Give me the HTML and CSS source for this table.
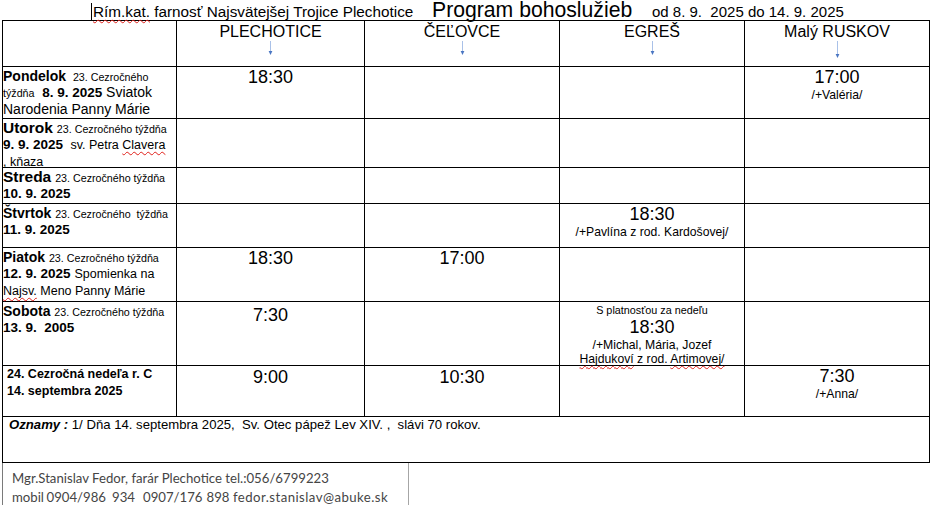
FILE: index.html
```html
<!DOCTYPE html>
<html lang="sk">
<head>
<meta charset="utf-8">
<title>Program bohoslužieb</title>
<link rel="stylesheet" href="styles.css">
</head>
<body>
<header class="title-line">
  <span class="parish"><span class="sp">Rím.kat.</span> farnosť Najsvätejšej Trojice Plechotice</span>
  <span class="prog">Program bohoslužieb</span>
  <span class="dates">od 8. 9.&nbsp; 2025 do 14. 9. 2025</span>
</header>

<main class="schedule">
  <!-- header row -->
  <div class="head"></div>
  <div class="head"><div class="place">PLECHOTICE</div><svg class="arrow" width="7" height="15" viewBox="0 0 7 15"><line x1="3.5" y1="0" x2="3.5" y2="11" stroke="#a9c1e8" stroke-width="1"/><path d="M1.6 10 L5.4 10 L3.5 14 Z" fill="#4a76c2"/></svg></div>
  <div class="head"><div class="place">ČEĽOVCE</div><svg class="arrow" width="7" height="15" viewBox="0 0 7 15"><line x1="3.5" y1="0" x2="3.5" y2="11" stroke="#a9c1e8" stroke-width="1"/><path d="M1.6 10 L5.4 10 L3.5 14 Z" fill="#4a76c2"/></svg></div>
  <div class="head"><div class="place">EGREŠ</div><svg class="arrow" width="7" height="15" viewBox="0 0 7 15"><line x1="3.5" y1="0" x2="3.5" y2="11" stroke="#a9c1e8" stroke-width="1"/><path d="M1.6 10 L5.4 10 L3.5 14 Z" fill="#4a76c2"/></svg></div>
  <div class="head"><div class="place">Malý RUSKOV</div><svg class="arrow" width="7" height="18" viewBox="0 0 7 18"><line x1="3.5" y1="0" x2="3.5" y2="14" stroke="#a9c1e8" stroke-width="1"/><path d="M1.6 13 L5.4 13 L3.5 17 Z" fill="#4a76c2"/></svg></div>

  <!-- Monday -->
  <div class="day"><b class="dn">Pondelok</b> <span class="wk">&nbsp;23. Cezročného</span><br><span class="wk">týždňa</span> <b class="dt">&nbsp;8. 9. 2025</b> Sviatok<br>Narodenia Panny Márie</div>
  <div class="slot"><div class="t">18:30</div></div>
  <div class="slot"></div>
  <div class="slot"></div>
  <div class="slot"><div class="t">17:00</div><div class="n">/+Valéria/</div></div>

  <!-- Tuesday -->
  <div class="day"><b class="dn big">Utorok</b> <span class="wk">23. Cezročného týždňa</span><br><b class="dt">9. 9. 2025</b> <span class="sm">&nbsp;sv. Petra <span class="sp">Clavera</span></span><br><span class="sm">, kňaza</span></div>
  <div class="slot"></div>
  <div class="slot"></div>
  <div class="slot"></div>
  <div class="slot"></div>

  <!-- Wednesday -->
  <div class="day"><b class="dn big">Streda</b> <span class="wk">23. Cezročného týždňa</span><br><b class="dt">10. 9. 2025</b></div>
  <div class="slot"></div>
  <div class="slot"></div>
  <div class="slot"></div>
  <div class="slot"></div>

  <!-- Thursday -->
  <div class="day"><b class="dn">Štvrtok</b> <span class="wk">23. Cezročného&nbsp; týždňa</span><br><b class="dt">11. 9. 2025</b></div>
  <div class="slot"></div>
  <div class="slot"></div>
  <div class="slot"><div class="t">18:30</div><div class="n">/+Pavlína z rod. Kardošovej/</div></div>
  <div class="slot"></div>

  <!-- Friday -->
  <div class="day"><b class="dn">Piatok</b> <span class="wk">23. Cezročného týždňa</span><br><b class="dt">12. 9. 2025</b> <span class="sm">Spomienka na</span><br><span class="sm"><span class="sp">Najsv.</span> Meno Panny Márie</span></div>
  <div class="slot"><div class="t">18:30</div></div>
  <div class="slot"><div class="t">17:00</div></div>
  <div class="slot"></div>
  <div class="slot"></div>

  <!-- Saturday -->
  <div class="day"><b class="dn">Sobota</b> <span class="wk">23. Cezročného týždňa</span><br><b class="dt">13. 9.&nbsp; 2005</b></div>
  <div class="slot low"><div class="t">7:30</div></div>
  <div class="slot"></div>
  <div class="slot vigil"><div class="pre">S platnosťou za nedeľu</div><div class="t">18:30</div><div class="n">/+Michal, Mária, Jozef</div><div class="n"><span class="sp">Hajdukoví</span> z rod. <span class="sp">Artimovej/</span></div></div>
  <div class="slot"></div>

  <!-- Sunday -->
  <div class="day sun"><b>24. Cezročná nedeľa r. C</b><br><b>14. septembra 2025</b></div>
  <div class="slot mid"><div class="t">9:00</div></div>
  <div class="slot mid"><div class="t">10:30</div></div>
  <div class="slot"></div>
  <div class="slot"><div class="t">7:30</div><div class="n">/+Anna/</div></div>

  <!-- announcements -->
  <div class="notes"><b><i>Oznamy :</i></b> 1/ Dňa 14. septembra 2025,&nbsp; Sv. Otec pápež Lev XIV. ,&nbsp; slávi 70 rokov.</div>
</main>

<footer class="contact">
  <div>Mgr.Stanislav Fedor, farár Plechotice tel.:056/6799223</div>
  <div class="phones"><span class="g1">mobil<span class="sp3"></span>0904/986<span class="sp6"></span>934</span><span class="g2">0907/176<span class="sp4"></span>898</span><span class="g3">fedor.stanislav@abuke.sk</span></div>
</footer>
</body>
</html>
```

FILE: styles.css
```css
* { box-sizing: border-box; }

html, body {
  margin: 0;
  padding: 0;
  background: #fff;
}

body {
  width: 934px;
  height: 505px;
  overflow: hidden;
  font-family: "Liberation Sans", Arial, sans-serif;
  color: #000;
}

/* ---------- title line ---------- */
.title-line {
  display: flex;
  align-items: baseline;
  height: 20px;
  padding-left: 91px;
  white-space: nowrap;
}

.parish {
  display: block;
  width: 341px;
  padding-left: 1px;
  border-left: 1px solid #000;
  font-size: 15.3px;
  line-height: 17px;
}

.prog {
  display: block;
  width: 220px;
  font-size: 21.2px;
  line-height: 19px;
}

.dates {
  display: block;
  font-size: 15px;
  line-height: 17px;
}

.sp {
  text-decoration: underline wavy #e0201a;
  text-decoration-thickness: 1px;
  text-underline-offset: 2px;
  text-decoration-skip-ink: none;
}

/* ---------- schedule grid ---------- */
.schedule {
  display: grid;
  grid-template-columns: 174px 188px 195px 185px 185px;
  grid-template-rows: 46px 52px 49px 36px 44px 54px 64px 51px 46px;
  width: 928px;
  margin-left: 2px;
  border-top: 1px solid #000;
  border-left: 1px solid #000;
}

.schedule > div {
  min-width: 0;
  border-right: 1px solid #000;
  border-bottom: 1px solid #000;
}

.head {
  padding-top: 0.5px;
  font-size: 16px;
  line-height: 19px;
  text-align: center;
}

.arrow {
  display: block;
  margin: 0 auto;
}

/* day labels */
.day {
  padding-top: 1px;
  font-size: 14px;
  line-height: 16px;
  white-space: nowrap;
}

.dn { font-size: 14px; }
.dn.big { font-size: 15.5px; line-height: 1; }
.wk { font-size: 10.7px; line-height: 1; }
.dt { font-size: 13.5px; }
.sm { font-size: 12.5px; }

.day.sun {
  padding: 0 0 0 4px;
  font-size: 12.5px;
  line-height: 16.5px;
}

/* mass slots */
.slot {
  text-align: center;
}

.slot.low { padding-top: 3px; }
.slot.mid { padding-top: 0.5px; }
.slot.vigil { padding-top: 0.5px; }

.t {
  font-size: 18px;
  line-height: 21px;
}

.n {
  font-size: 12.2px;
  line-height: 15px;
}

.vigil .pre { font-size: 10.8px; line-height: 14px; }
.vigil .n { line-height: 14px; }

/* announcements */
.notes {
  grid-column: 1 / -1;
  padding-left: 6px;
  font-size: 13.15px;
  line-height: 15px;
}

/* ---------- contact box ---------- */
.contact {
  width: 407px;
  height: 42px;
  margin-left: 2px;
  padding: 6px 0 0 9px;
  border-left: 1px solid #7a7a7a;
  border-right: 1px solid #a6a6a6;
  font-family: "Lato", "Liberation Sans", sans-serif;
  font-size: 13.2px;
  line-height: 19px;
  color: #454545;
  white-space: nowrap;
}

.phones { display: flex; }
.g1 { width: 131px; }
.g2 { width: 90px; }
.g3 { letter-spacing: 0.45px; }

.sp3, .sp4, .sp6 { display: inline-block; }
.sp3 { width: 2.5px; }
.sp4 { width: 4px; }
.sp6 { width: 6px; }
```
